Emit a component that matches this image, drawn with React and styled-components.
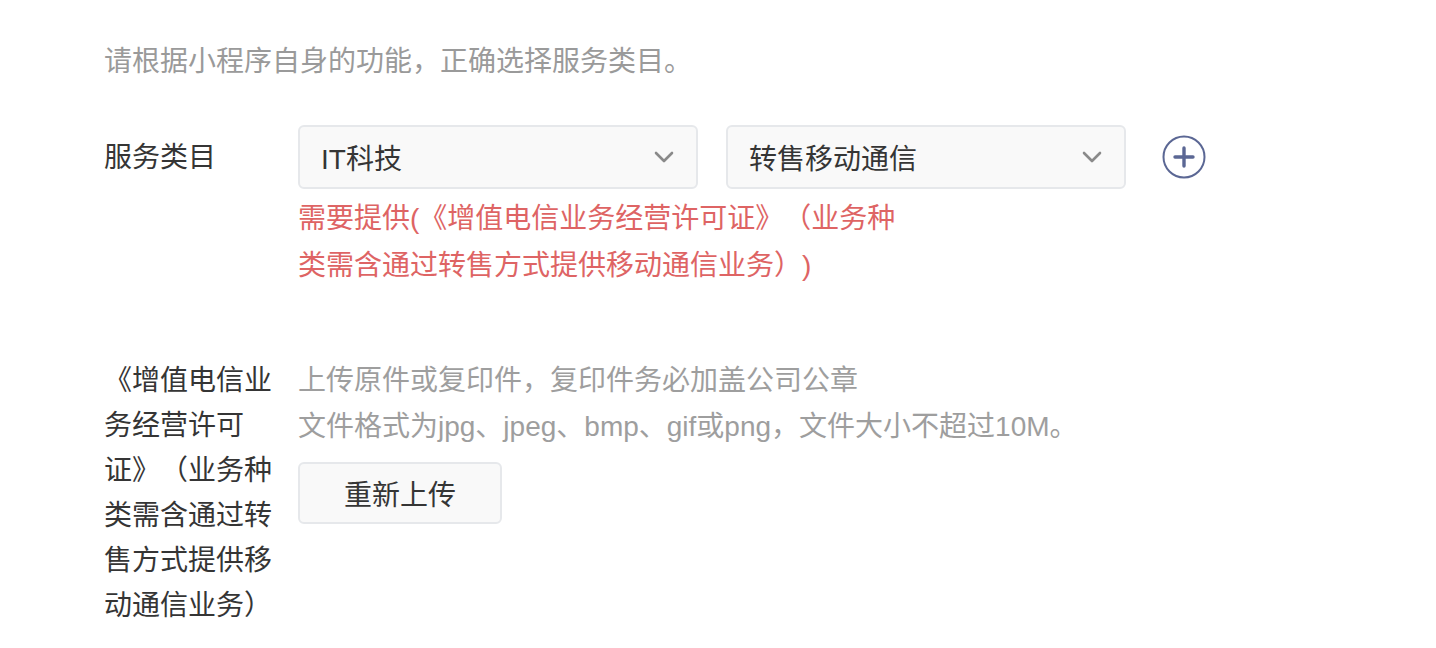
import React from "react";
import styled, { createGlobalStyle } from "styled-components";

const GlobalStyle = createGlobalStyle`
  html, body {
    margin: 0;
    padding: 0;
    background: #ffffff;
  }
  body {
    font-family: "Liberation Sans", "Noto Sans CJK SC", sans-serif;
    color: #353535;
    text-spacing-trim: space-all;
  }
`;

const Page = styled.div`
  padding: 39px 0 0 104px;
  box-sizing: border-box;
`;

const Intro = styled.p`
  margin: 0 0 40px;
  font-size: 28px;
  line-height: 46px;
  color: #9a9a9a;
`;

const FormRow = styled.div`
  display: grid;
  grid-template-columns: 168px 1fr;
  column-gap: 26px;
  margin-top: ${(p) => p.$top || 0}px;
`;

const Label = styled.div`
  font-size: 28px;
  line-height: 45px;
  color: #353535;
  padding-top: ${(p) => p.$pad || 0}px;
  word-break: break-all;
`;

const Controls = styled.div`
  display: flex;
  flex-direction: column;
  align-items: flex-start;
`;

const SelectRow = styled.div`
  display: flex;
  align-items: center;
  gap: 28px;
`;

const Select = styled.div`
  width: 400px;
  height: 64px;
  box-sizing: border-box;
  border: 2px solid #e6e8eb;
  border-radius: 6px;
  background: #f9f9f9;
  display: flex;
  align-items: center;
  justify-content: space-between;
  padding: 0 22px 0 21px;
  font-size: 28px;
  color: #353535;
`;

const Chevron = styled.svg`
  width: 20px;
  height: 12px;
  flex: none;
`;

const AddButton = styled.svg`
  width: 44px;
  height: 44px;
  margin-left: 8px;
  flex: none;
`;

const ErrorText = styled.div`
  width: 600px;
  margin-top: 6px;
  font-size: 28px;
  line-height: 47px;
  color: #de6464;
`;

const Hint = styled.div`
  font-size: 28px;
  line-height: 46px;
  color: #9e9e9e;
`;

const UploadButton = styled.button`
  margin-top: 12px;
  width: 204px;
  height: 62px;
  box-sizing: border-box;
  border: 2px solid #e6e8eb;
  border-radius: 6px;
  background: #f9f9f9;
  font-family: inherit;
  font-size: 28px;
  color: #353535;
  cursor: pointer;
  padding: 0;
`;

const ChevronIcon = () => (
  <Chevron viewBox="0 0 20 12">
    <path d="M2 2 L10 10 L18 2" fill="none" stroke="#8a8a8a" strokeWidth="2.6" strokeLinecap="round" strokeLinejoin="round" />
  </Chevron>
);

const PlusIcon = () => (
  <AddButton viewBox="0 0 44 44">
    <circle cx="22" cy="22" r="20.5" fill="none" stroke="#5b6794" strokeWidth="2" />
    <path d="M13 22 H31 M22 13 V31" stroke="#5b6794" strokeWidth="3.4" strokeLinecap="round" />
  </AddButton>
);

export default function App() {
  return (
    <>
      <GlobalStyle />
      <Page>
        <Intro>请根据小程序自身的功能，正确选择服务类目。</Intro>
        <FormRow>
          <Label $pad={10}>服务类目</Label>
          <Controls>
            <SelectRow>
              <Select>
                <span>IT科技</span>
                <ChevronIcon />
              </Select>
              <Select>
                <span>转售移动通信</span>
                <ChevronIcon />
              </Select>
              <PlusIcon />
            </SelectRow>
            <ErrorText>需要提供(《增值电信业务经营许可证》（业务种类需含通过转售方式提供移动通信业务）)</ErrorText>
          </Controls>
        </FormRow>
        <FormRow $top={69}>
          <Label>《增值电信业务经营许可证》（业务种类需含通过转售方式提供移动通信业务）</Label>
          <Controls>
            <Hint>上传原件或复印件，复印件务必加盖公司公章</Hint>
            <Hint>文件格式为jpg、jpeg、bmp、gif或png，文件大小不超过10M。</Hint>
            <UploadButton>重新上传</UploadButton>
          </Controls>
        </FormRow>
      </Page>
    </>
  );
}
